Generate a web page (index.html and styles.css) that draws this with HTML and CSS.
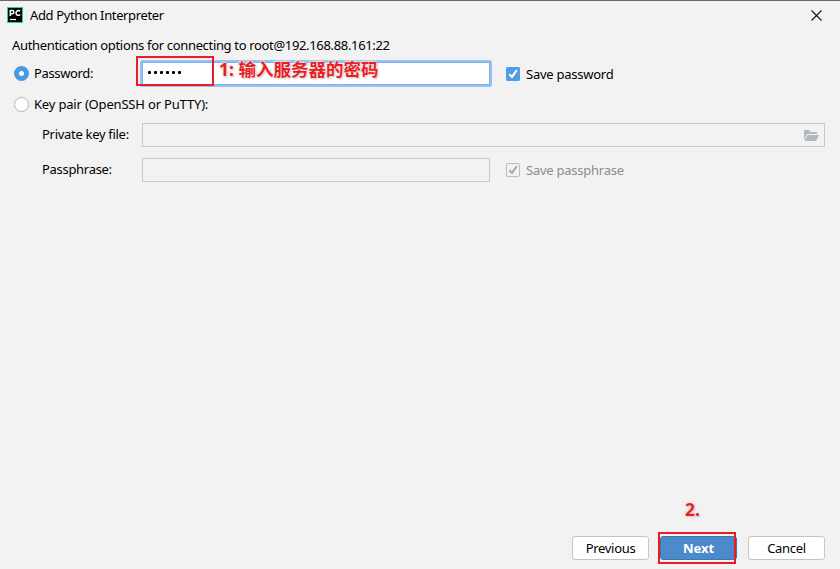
FILE: index.html
```html
<!DOCTYPE html>
<html lang="en">
<head>
<meta charset="utf-8">
<title>Add Python Interpreter</title>
<link rel="stylesheet" href="styles.css">
</head>
<body>
<div class="dialog">
  <header class="titlebar">
    <svg class="logo" width="16" height="16" viewBox="0 0 16 16"><rect width="16" height="16" fill="#21d789"/><rect x="1" y="1" width="14" height="14" fill="#050505"/><path d="M3.3 9V3.5H5.2a1.6 1.6 0 0 1 0 3.3H3.5M13.2 4.3a2.4 2.4 0 1 0 0 3.3" fill="none" stroke="#fff" stroke-width="1.5"/><path d="M3 12.5h6" stroke="#fff" stroke-width="1.2"/></svg>
    <span class="title">Add Python Interpreter</span>
    <svg class="close" width="11" height="11" viewBox="0 0 11 11"><path d="M.5.5l10 10M10.5.5l-10 10" stroke="#1a1a1a" stroke-width="1.2"/></svg>
  </header>
  <main class="content">
    <p class="intro">Authentication options for connecting to root@192.168.88.161:22</p>
    <div class="row password-row">
      <span class="radio selected"></span>
      <span class="label t-password">Password:</span>
      <div class="field focused">
        <span class="dots"><i></i><i></i><i></i><i></i><i></i><i></i></span>
        <span class="marker marker-field"></span>
        <span class="note note-field">1: 输入服务器的密码</span>
      </div>
      <svg class="check" width="14" height="14" viewBox="0 0 14 14"><rect width="14" height="14" rx="1.5" fill="#4f9ee3"/><path d="M3.3 7.2L6 9.9l4.8-6.8" fill="none" stroke="#fff" stroke-width="2"/></svg>
      <span class="t-save">Save password</span>
    </div>
    <div class="row key-row">
      <span class="radio"></span>
      <span class="label t-key">Key pair (OpenSSH or PuTTY):</span>
    </div>
    <div class="row file-row">
      <span class="label t-file">Private key file:</span>
      <div class="field wide">
        <svg width="15" height="11" viewBox="0 0 15 11"><path d="M0 0h5l1.5 2H13v2H3L0 10z" fill="#afb8bd"/><path d="M3.5 5H15l-3 6H.5z" fill="#afb8bd"/></svg>
      </div>
    </div>
    <div class="row phrase-row">
      <span class="label t-phrase">Passphrase:</span>
      <div class="field"></div>
      <svg class="check" width="14" height="14" viewBox="0 0 14 14"><rect x=".5" y=".5" width="13" height="13" rx="1.5" fill="#f2f2f2" stroke="#bdbdbd"/><path d="M3.3 7.2L6 9.9l4.8-6.8" fill="none" stroke="#ababab" stroke-width="2"/></svg>
      <span class="t-savephrase">Save passphrase</span>
    </div>
  </main>
  <footer class="actions">
    <div class="button">Previous</div>
    <div class="button primary">Next<span class="marker marker-next"></span><span class="note note-next">2.</span></div>
    <div class="button">Cancel</div>
  </footer>
</div>
</body>
</html>
```
FILE: styles.css
```css
* { box-sizing: border-box; }
body { margin: 0; font: 13px/18px "Noto Sans", "Noto Sans CJK SC", sans-serif; color: #000; background: #f2f2f2; }
.dialog { width: 840px; height: 569px; display: flex; flex-direction: column; border-top: 1px solid #6b696b; overflow: hidden; white-space: nowrap; }
svg { display: block; flex: none; }
.titlebar { height: 28px; display: flex; align-items: center; padding: 0 18px 0 7px; }
.title { margin-left: 7px; letter-spacing: -.37px; }
.close { margin-left: auto; }
.content { flex: 1; padding: 7px 15px 0 12px; }
.intro { margin: 0; height: 18px; letter-spacing: -.335px; }
.row { display: flex; align-items: center; }
.password-row { height: 27px; margin-top: 6px; }
.key-row { height: 18px; margin-top: 8px; }
.file-row { height: 24px; margin-top: 10px; padding-left: 30px; }
.phrase-row { height: 24px; margin-top: 11px; padding-left: 30px; }
.radio { width: 15px; height: 15px; margin-left: 2px; border: 1px solid #b5b5b5; border-radius: 50%; background: #fff; flex: none; }
.radio.selected { border: 5px solid #4a9ae2; }
.radio + .label { margin-left: 5px; }
.password-row .label { margin-top: -1px; }
.t-password { width: 106px; letter-spacing: -.35px; }
.t-key { letter-spacing: -.18px; }
.t-file, .t-phrase { width: 100px; letter-spacing: -.3px; margin-top: -2px; }
.field { position: relative; width: 348px; height: 24px; border: 1px solid #c9c9c9; flex: none; }
.field.wide { width: 683px; display: flex; align-items: center; justify-content: flex-end; padding-right: 5px; }
.field.focused { width: 352px; height: 27px; background: #fff; border: 2px solid #97c3f3; outline: 1px solid #7dafdf; outline-offset: -3px; border-radius: 2px; }
.dots { display: flex; gap: 3px; padding: 9px 0 0 6px; }
.dots i { width: 3px; height: 3px; border-radius: 1px; background: #000; }
.check { margin-left: 16px; }
.password-row .check { margin-left: 14px; }
.check + span { margin-left: 6px; letter-spacing: -.25px; }
.t-savephrase { color: #8c8c8c; }
.marker { position: absolute; border: 2px solid #ed1c24; }
.marker-field { left: -6px; top: -6px; width: 78px; height: 30px; }
.marker-next { left: -3px; top: -5px; width: 78px; height: 32px; }
.note { position: absolute; color: #ed1c24; font-weight: 700; font-size: 17.5px; line-height: 24px; letter-spacing: 0; text-shadow: 0 0 2px #fff, 1px 1px 2px #bbb, -1px -1px 2px #ddd; }
.note-field { left: 77px; top: -5px; }
.note-next { left: 24px; top: -40px; }
.actions { height: 33px; display: flex; justify-content: flex-end; gap: 11px; padding-right: 15px; }
.button { position: relative; width: 77px; height: 24px; border: 1px solid #c4c4c4; border-radius: 3px; background: #fff; text-align: center; line-height: 23px; letter-spacing: -.3px; }
.primary { border-color: #3d78b5; background: #4d8acb; color: #fff; font-weight: 700; letter-spacing: 0; }
```
